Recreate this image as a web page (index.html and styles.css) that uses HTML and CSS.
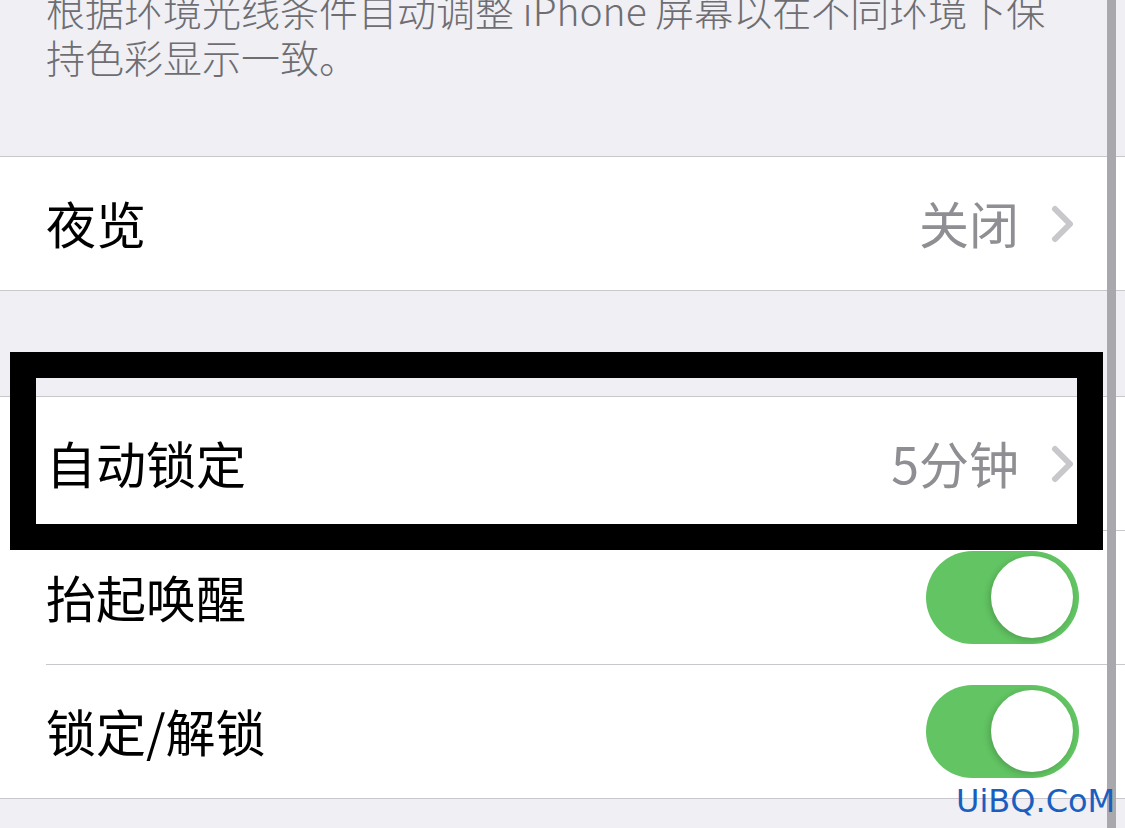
FILE: index.html
```html
<!DOCTYPE html>
<html lang="zh-CN">
<head>
<meta charset="utf-8">
<link rel="stylesheet" href="styles.css">
</head>
<body>
<div class="screen">
  <p class="footer-note">根据环境光线条件自动调整 iPhone 屏幕以在不同环境下保<br>持色彩显示一致。</p>

  <div class="group">
    <div class="row">
      <span class="label">夜览</span>
      <span class="value">关闭</span>
      <svg class="chevron" viewBox="0 0 24 40" width="24" height="40"><path d="M4 5 L19 20 L4 35" fill="none" stroke="#c7c7cc" stroke-width="6" stroke-linecap="round" stroke-linejoin="round"/></svg>
    </div>
  </div>

  <div class="spacer"></div>

  <div class="group">
    <div class="row">
      <span class="label">自动锁定</span>
      <span class="value">5分钟</span>
      <svg class="chevron" viewBox="0 0 24 40" width="24" height="40"><path d="M4 5 L19 20 L4 35" fill="none" stroke="#c7c7cc" stroke-width="6" stroke-linecap="round" stroke-linejoin="round"/></svg>
    </div>
    <div class="row">
      <span class="label">抬起唤醒</span>
      <span class="switch"><span class="knob"></span></span>
    </div>
    <div class="row">
      <span class="label">锁定/解锁</span>
      <span class="switch"><span class="knob"></span></span>
    </div>
  </div>

  <div class="highlight"></div>
  <div class="scrollbar"></div>
  <div class="watermark">UiBQ.CoM</div>
</div>
</body>
</html>
```

FILE: styles.css
```css
html, body {
  margin: 0;
  padding: 0;
  background: #efeff4;
}
.screen {
  position: relative;
  width: 1125px;
  height: 828px;
  overflow: hidden;
  background: #efeff4;
  font-family: "Noto Sans CJK SC", "Noto Sans", sans-serif;
}
.footer-note {
  margin: -14px 0 0 0;
  padding: 0 60px 76px 46px;
  font-size: 39px;
  font-weight: 300;
  line-height: 47px;
  color: #6d6d72;
  white-space: nowrap;
}
.group {
  background: #fff;
  border-top: 1px solid #c8c7cc;
  border-bottom: 1px solid #c8c7cc;
}
.row {
  display: flex;
  align-items: center;
  height: 133px;
  margin-left: 46px;
  padding-right: 46px;
  border-bottom: 1px solid #c8c7cc;
}
.row:last-child {
  border-bottom: none;
}
.label {
  flex: 1;
  font-size: 50px;
  color: #000;
  line-height: 1;
  margin-top: -4px;
}
.value {
  font-size: 50px;
  color: #8e8e93;
  line-height: 1;
  margin-right: 32px;
  margin-top: -4px;
}
.chevron {
  display: block;
  margin-right: 4px;
}
.spacer {
  height: 105px;
}
.switch {
  position: relative;
  display: block;
  width: 153px;
  height: 93px;
  border-radius: 47px;
  background: #62c462;
}
.knob {
  position: absolute;
  right: 6px;
  top: 5px;
  width: 82px;
  height: 82px;
  border-radius: 50%;
  background: #fff;
  box-shadow: -2px 2px 6px rgba(0,0,0,0.18);
}
.highlight {
  position: absolute;
  left: 10px;
  top: 352px;
  width: 1041px;
  height: 146px;
  border: 26px solid #000;
}
.scrollbar {
  position: absolute;
  left: 1107px;
  top: 0;
  width: 9px;
  height: 828px;
  background: #a9a9ad;
}
.watermark {
  position: absolute;
  left: 956px;
  top: 781px;
  font-family: "DejaVu Sans", sans-serif;
  font-size: 32px;
  line-height: 40px;
  color: #1a5fc0;
}
```
